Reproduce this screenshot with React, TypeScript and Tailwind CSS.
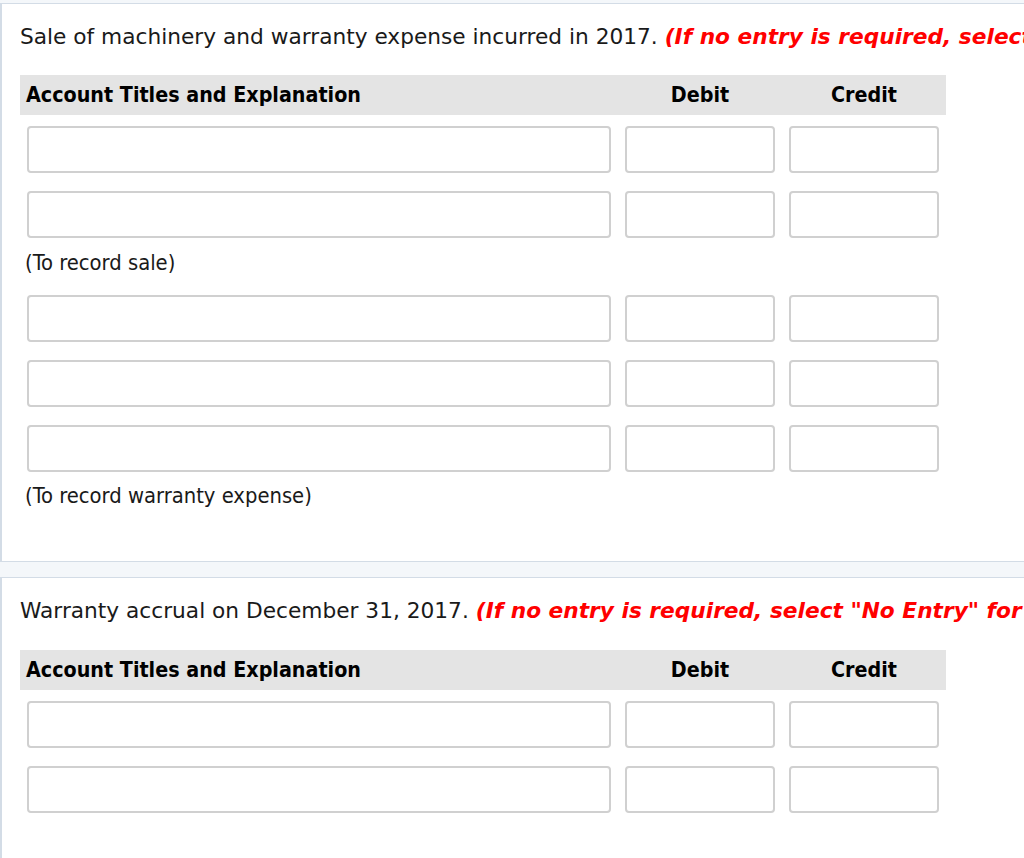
const sans = "font-['DejaVu_Sans',Verdana,sans-serif]"
const tah = "font-['DejaVu_Sans_Condensed','DejaVu_Sans',Tahoma,sans-serif]"

function Field({ wide }: { wide?: boolean }) {
  return (
    <div className="px-[7px]">
      <input
        type="text"
        className={`block h-[47px] ${wide ? 'w-[584px]' : 'w-[150px]'} rounded-[4px] border-2 border-[#d0d0d0] bg-white outline-none`}
      />
    </div>
  )
}

function EntryRow() {
  return (
    <div className="grid grid-cols-[598px_164px_164px]">
      <Field wide />
      <Field />
      <Field />
    </div>
  )
}

function Header() {
  return (
    <div className={`grid h-[40px] w-[926px] grid-cols-[598px_164px_164px] items-center bg-[#e4e4e4] text-[21.3px] font-bold text-black ${tah}`}>
      <div className="pl-[6px]">Account Titles and Explanation</div>
      <div className="text-center">Debit</div>
      <div className="text-center">Credit</div>
    </div>
  )
}

function Note({ children, className }: { children: React.ReactNode; className?: string }) {
  return <div className={`pl-[5px] text-[21.8px] leading-[24px] text-[#1a1a1a] ${tah} ${className ?? ''}`}>{children}</div>
}

function Prompt({ text, note }: { text: string; note: string }) {
  return (
    <div className={`whitespace-nowrap text-[21.7px] leading-[24px] text-[#1a1a1a] ${sans}`}>
      {text} <span className="font-bold italic text-[#ff0000]">{note}</span>
    </div>
  )
}

export default function App() {
  return (
    <div className="h-[858px] w-[1024px] overflow-hidden bg-[#f4f7fa] pt-[3px]">
      <div className="w-[1200px] border-l-2 border-t border-b border-[#d3dce6] bg-white pb-[53px] pl-[18px] pt-[21px]">
        <Prompt
          text="Sale of machinery and warranty expense incurred in 2017."
          note='(If no entry is required, select "No Entry" for the account titles and enter 0 for the amounts.)'
        />
        <div className="mt-[26px]">
          <Header />
        </div>
        <div className="mt-[11px] flex flex-col gap-[18px]">
          <EntryRow />
          <EntryRow />
        </div>
        <Note className="mt-[13px]">(To record sale)</Note>
        <div className="mt-[20px] flex flex-col gap-[18px]">
          <EntryRow />
          <EntryRow />
          <EntryRow />
        </div>
        <Note className="mt-[12px]">(To record warranty expense)</Note>
      </div>

      <div className="mt-[15px] w-[1200px] border-l-2 border-t border-[#d3dce6] bg-white pb-[60px] pl-[18px] pt-[21px]">
        <Prompt
          text="Warranty accrual on December 31, 2017."
          note='(If no entry is required, select "No Entry" for the account titles and enter 0 for the amounts.)'
        />
        <div className="mt-[27px]">
          <Header />
        </div>
        <div className="mt-[11px] flex flex-col gap-[18px]">
          <EntryRow />
          <EntryRow />
        </div>
      </div>
    </div>
  )
}
